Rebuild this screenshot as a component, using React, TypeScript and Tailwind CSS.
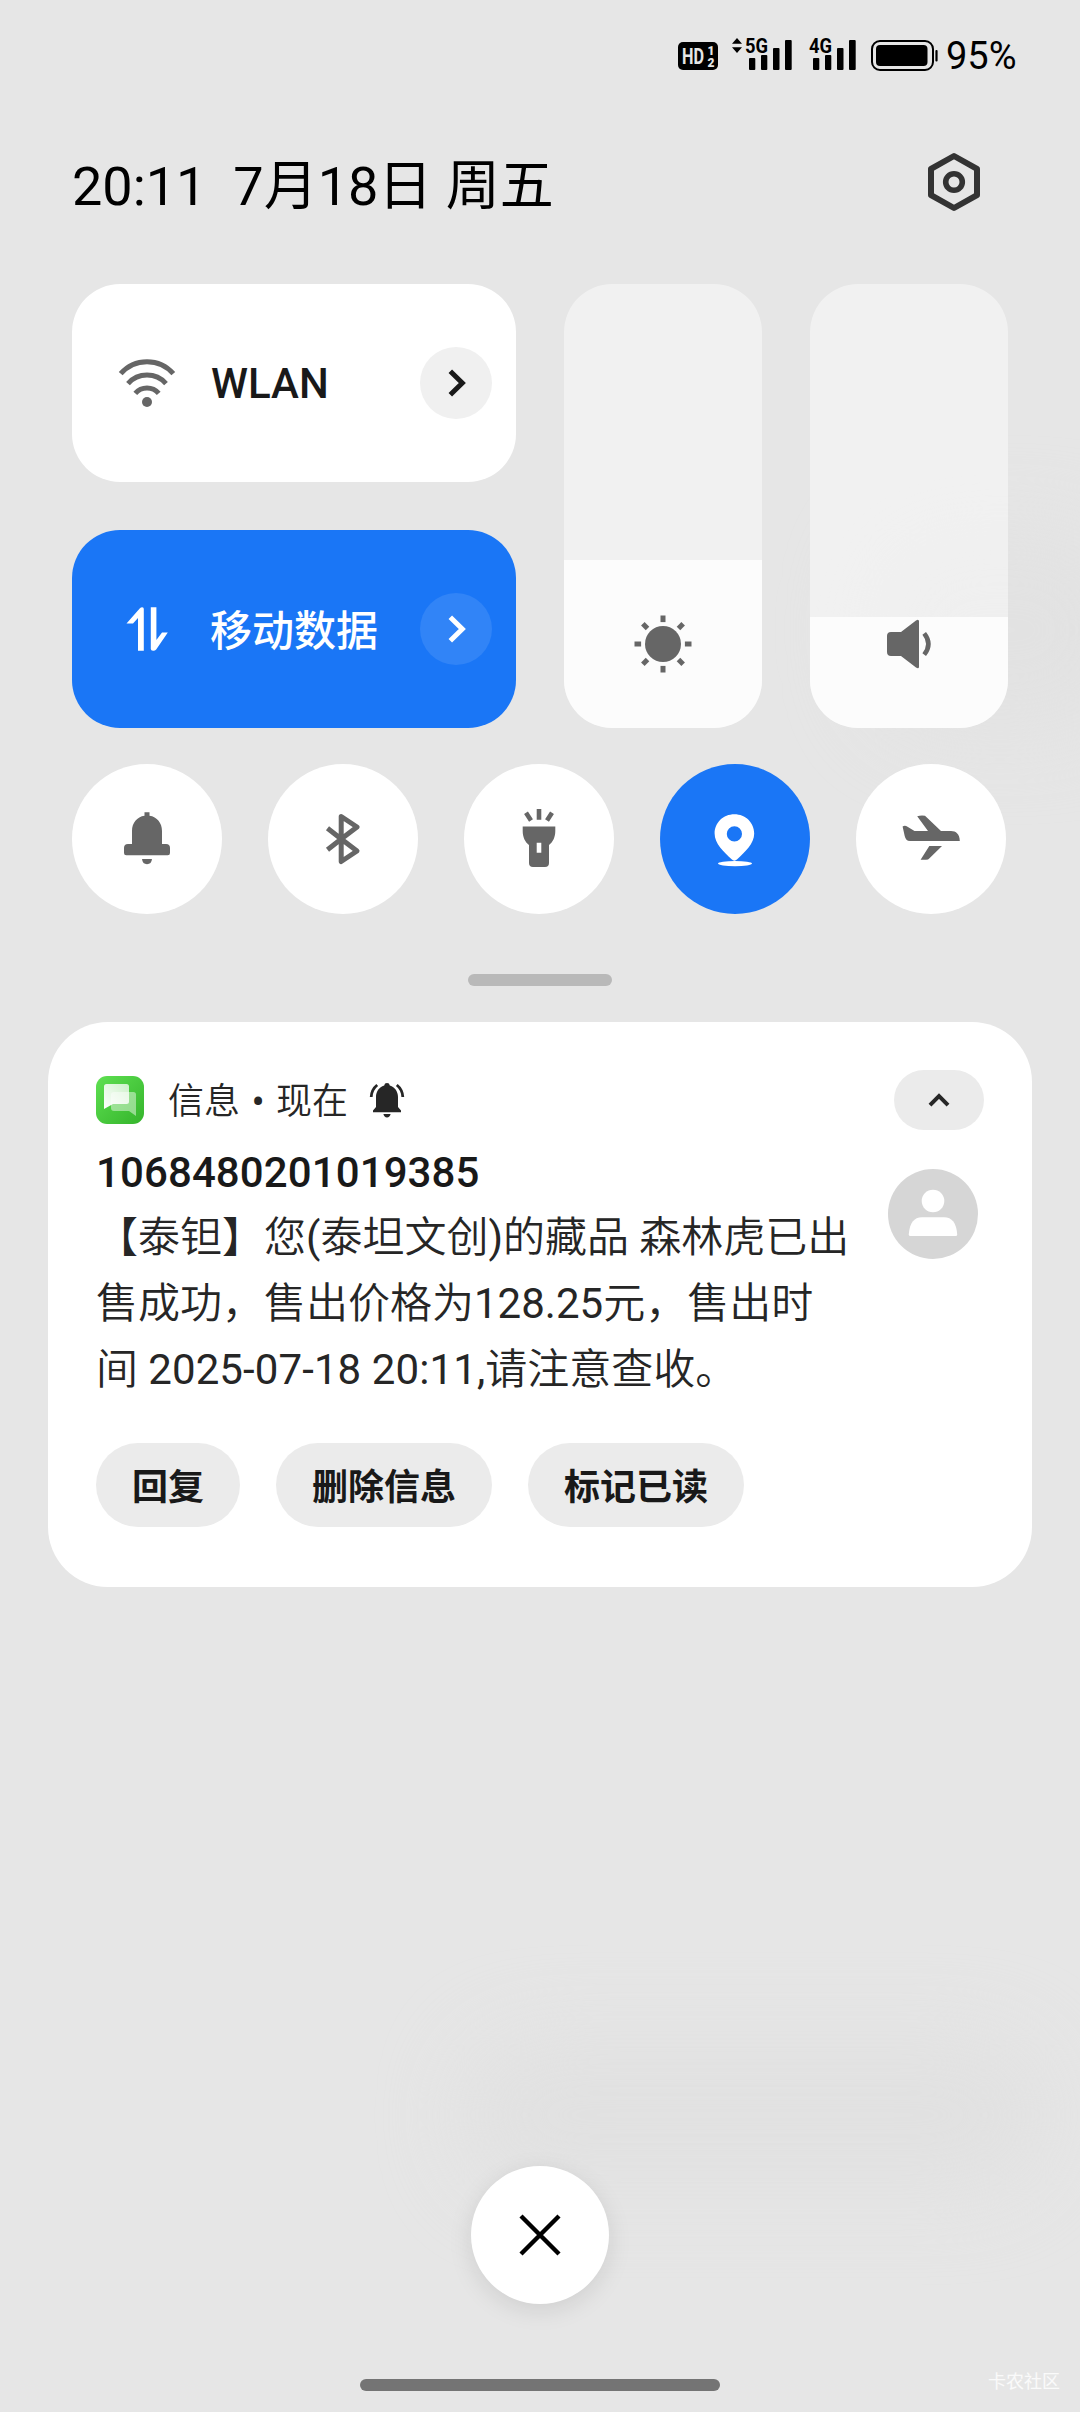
import type { ReactNode } from 'react';

type IconProps = { children: ReactNode; size?: number; className?: string };

// every icon is drawn around its own centre
const Icon = ({ children, size = 64, className }: IconProps) => (
	<svg
		width={size}
		height={size}
		viewBox={`${-size / 2} ${-size / 2} ${size} ${size}`}
		fill="currentColor"
		className={className}
	>
		{children}
	</svg>
);

const WifiIcon = () => (
	<Icon>
		<g fill="none" stroke="currentColor" strokeWidth="5">
			<path d="M-26.3 -9.3A34.8 34.8 0 0 1 26.3 -9.3" />
			<path d="M-19 0.6A25.5 25.5 0 0 1 19 0.6" />
			<path d="M-11.7 10.3A15.5 15.5 0 0 1 11.7 10.3" />
		</g>
		<circle cy="19" r="5" />
	</Icon>
);

const DataIcon = () => (
	<Icon>
		<path d="M-20.5 -5.6L-7.3 -20.4Q-6.2 -21.7 -4.7 -21.7Q-3.2 -21.6 -3.2 -20V21.7H-9V-11L-14 -5.6Z" />
		<path d="M20.8 3.4L9.2 20.4Q8 21.8 6 21.7Q3.8 21.6 3.8 20V-21.7H9.4V11L15 3.4Z" />
	</Icon>
);

const SunIcon = () => (
	<Icon>
		<circle r="18" />
		{[0, 45, 90, 135, 180, 225, 270, 315].map((angle) => (
			<rect key={angle} x="-2.5" y="-28.5" width="5" height="6.6" transform={`rotate(${angle})`} />
		))}
	</Icon>
);

const SpeakerIcon = () => (
	<Icon>
		<path d="M-18 -12H-8L7 -23.6Q10 -25.5 10 -22.5V22.5Q10 25.5 7 23.6L-8 12H-18Q-22 12 -22 8V-8Q-22 -12 -18 -12Z" />
		<path d="M15.2 -10.6Q23.6 0 15.2 10.6" fill="none" stroke="currentColor" strokeWidth="4.6" />
	</Icon>
);

const BellIcon = () => (
	<Icon>
		<path d="M-2.5 -26.7H2.5V-23.2C10 -22.2 15 -16 15 -8V5H19Q23 5 23 9V14Q23 16.3 20.7 16.3H-20.7Q-23 16.3 -23 14V9Q-23 5 -19 5H-15V-8C-15 -16 -10 -22.2 -2.5 -23.2Z" />
		<path d="M-5 20H5Q4.5 25.2 0 25.2Q-4.5 25.2 -5 20Z" />
	</Icon>
);

const BluetoothIcon = () => (
	<Icon>
		<path
			d="M-15.5 -10.8L-1.8 0L14 12L-1.8 22.5V-22.5L14 -12L-1.8 0L-15.5 10.8"
			fill="none"
			stroke="currentColor"
			strokeWidth="5"
			strokeLinejoin="round"
		/>
	</Icon>
);

const TorchIcon = () => (
	<Icon>
		<path d="M0 -30V-19.3M-13 -26.3L-8 -18.6M13 -26.3L8 -18.6" stroke="currentColor" strokeWidth="4.6" />
		<path
			fillRule="evenodd"
			d="M-16.3 -12.4H16.3V-8C16.3 -2 14 3 10 6V24Q10 28 6 28H-6Q-10 28 -10 24V6C-14 3 -16.3 -2 -16.3 -8ZM-2.3 3.8V13.8H2.3V3.8Z"
		/>
	</Icon>
);

const PinIcon = () => (
	<Icon>
		<path
			fillRule="evenodd"
			d="M-0.6 -24.8C10.6 -24.8 19.2 -16.4 19.2 -5.5C19.2 5 10 12.5 2.2 20.3Q-0.6 23 -3.4 20.3C-11.2 12.5 -20.4 5 -20.4 -5.5C-20.4 -16.4 -11.8 -24.8 -0.6 -24.8ZM-0.6 -12.7A7.6 7.6 0 1 0 -0.6 2.5A7.6 7.6 0 1 0 -0.6 -12.7Z"
		/>
		<ellipse cy="24.6" rx="17" ry="2.7" />
	</Icon>
);

const PlaneIcon = () => (
	<Icon>
		<path d="M-28.4 -12.6Q-26 -13.8 -23.5 -12.3L-16.5 -8H-3L-13.8 -22.8Q-10 -23.8 -6 -23.2L10 -8H20C25 -8 28.7 -5 28.8 2H-21C-24 2 -25.6 0 -26.3 -3Z" />
		<path d="M-1.7 7H11L-1.5 19.3Q-2.7 20.8 -5 20.8H-10.4Z" />
	</Icon>
);

const GearIcon = () => (
	<Icon>
		<g fill="none" stroke="currentColor" strokeLinejoin="round">
			<path d="M0 -26L23 -13.2V13.2L0 26L-23 13.2V-13.2Z" strokeWidth="6" />
			<circle r="8.3" strokeWidth="5.6" />
		</g>
	</Icon>
);

const RingingIcon = () => (
	<Icon size={40}>
		<path d="M0 -17Q2.5 -17 2.8 -14.6C8 -13 11 -8.5 11 -3V7L14 10.5V12.3H-14V10.5L-11 7V-3C-11 -8.5 -8 -13 -2.8 -14.6Q-2.5 -17 0 -17Z" />
		<path d="M-3.6 14H3.6Q2.8 17.4 0 17.4Q-2.8 17.4 -3.6 14Z" />
		<path
			d="M-15.8 -3Q-15.4 -10.5 -9.8 -15M15.8 -3Q15.4 -10.5 9.8 -15"
			fill="none"
			stroke="currentColor"
			strokeWidth="2.8"
		/>
	</Icon>
);

const MessagesIcon = () => (
	<svg width="48" height="48" viewBox="0 0 48 48">
		<defs>
			<linearGradient id="app" x1="0" y1="0" x2="1" y2="1">
				<stop offset="0" stopColor="#5fe052" />
				<stop offset="1" stopColor="#34b42b" />
			</linearGradient>
			<linearGradient id="front" x1="0" y1="1" x2="1" y2="0">
				<stop offset="0" stopColor="#fff" />
				<stop offset="1" stopColor="#fff" stopOpacity="0.72" />
			</linearGradient>
		</defs>
		<rect width="48" height="48" rx="11" fill="url(#app)" />
		<path d="M18 16H37.5Q40 16 40 18.5V40L33 35H18Q15 35 15 32V19Q15 16 18 16Z" fill="#fff" fillOpacity="0.45" />
		<path d="M10.5 8H30.5Q33 8 33 10.5V25.5Q33 28 30.5 28H17L8 33V10.5Q8 8 10.5 8Z" fill="url(#front)" />
	</svg>
);

const Signal = ({ label, arrows }: { label: string; arrows?: boolean }) => (
	<svg width={arrows ? 60 : 48} height="44" viewBox={arrows ? '-12 -3 60 44' : '0 -3 48 44'}>
		{arrows && <path d="M-12 6.7L-7 1L-2 6.7ZM-12 10.3H-2L-7 16Z" />}
		<text
			x="1"
			y="16"
			fontSize="20"
			fontWeight="700"
			textLength="23"
			lengthAdjust="spacingAndGlyphs"
			className="font-['Roboto',sans-serif]"
		>
			{label}
		</text>
		<rect x="5" y="21" width="6.3" height="12" rx="1" />
		<rect x="17" y="18" width="6.3" height="15" rx="1" />
		<rect x="29" y="11" width="6.5" height="22" rx="1" />
		<rect x="41" y="3" width="6.7" height="30" rx="1" />
	</svg>
);

const StatusBar = () => (
	<div className="flex h-28 items-center justify-end pr-[60px]">
		<svg width="40" height="28" viewBox="0 0 40 28" className="mr-3.5" fontWeight="700" fill="#e6e6e6">
			<rect width="40" height="28" rx="5" fill="#000" />
			<g className="font-['Roboto',sans-serif]">
				<text x="4" y="22" fontSize="22" textLength="22" lengthAdjust="spacingAndGlyphs">
					HD
				</text>
				<g fontSize="12" fontWeight="900">
					<text x="29.5" y="13">
						1
					</text>
					<text x="29.5" y="24.8">
						2
					</text>
				</g>
			</g>
		</svg>
		<Signal label="5G" arrows />
		<div className="w-4" />
		<Signal label="4G" />
		<svg width="67" height="32" viewBox="0 0 67 32" className="ml-[15px]">
			<rect x="1" y="1" width="61" height="29" rx="8" fill="none" stroke="#000" strokeWidth="2" />
			<rect x="5" y="5" width="51.5" height="21" rx="4" />
			<rect x="64.4" y="10" width="2.2" height="11.5" rx="1" />
		</svg>
		<span className="ml-2 w-[74px] text-[38px] leading-none whitespace-nowrap">95%</span>
	</div>
);

const Tile = ({ icon, label, active }: { icon: ReactNode; label: string; active?: boolean }) => (
	<div
		className={
			active
				? 'flex h-[198px] items-center rounded-[48px] bg-[#1a76f6] pr-6 pl-[43px] text-white'
				: 'flex h-[198px] items-center rounded-[48px] bg-white pr-6 pl-[43px] text-[#666]'
		}
	>
		{icon}
		<span
			className={
				active ? 'mt-1 ml-[31px] text-[42px] font-medium' : 'mt-px ml-8 text-[42px] font-medium text-[#191919]'
			}
		>
			{label}
		</span>
		<div
			className={
				active
					? 'ml-auto flex size-[72px] items-center justify-center rounded-full bg-[#3184f7]'
					: 'ml-auto flex size-[72px] items-center justify-center rounded-full bg-[#f0f0f0] text-[#191919]'
			}
		>
			<Icon size={32}>
				<path d="M-5.7 -11.8L6.3 0L-5.7 11.8" fill="none" stroke="currentColor" strokeWidth="5" />
			</Icon>
		</div>
	</div>
);

const Slider = ({ icon, level }: { icon: ReactNode; level: number }) => (
	<div className="relative flex h-[444px] w-[198px] items-end justify-center overflow-hidden rounded-[48px] bg-white/45 text-[#666]">
		<div className="absolute inset-x-0 bottom-0 bg-[#fcfcfc]" style={{ height: level }} />
		<div className="relative mb-[52px]">{icon}</div>
	</div>
);

const toggles = [
	{ name: 'bell', icon: <BellIcon /> },
	{ name: 'bluetooth', icon: <BluetoothIcon /> },
	{ name: 'torch', icon: <TorchIcon /> },
	{ name: 'location', icon: <PinIcon />, active: true },
	{ name: 'plane', icon: <PlaneIcon /> },
];

const Notification = () => (
	<div className="mx-12 mt-9 h-[565px] rounded-[60px] bg-white px-12 pt-12 text-[#262626]">
		<div className="flex h-[60px] items-center">
			<MessagesIcon />
			<span className="mt-1 ml-6 w-[199px] text-[36px] leading-[54px] font-[350] whitespace-nowrap">
				信息<span className="inline-block w-9 text-center font-medium">•</span>现在
			</span>
			<RingingIcon />
			<div className="ml-auto flex h-[60px] w-[90px] items-center justify-center rounded-full bg-[#ebebeb]">
				<Icon size={32}>
					<path d="M-9 5.2L0 -4L9 5.2" fill="none" stroke="currentColor" strokeWidth="4" />
				</Icon>
			</div>
		</div>
		<div className="mt-[10px] flex">
			<div className="w-[792px]">
				<div className="text-[42px] leading-[66px] font-medium tracking-[0.1px] text-[#191919]">1068480201019385</div>
				<p className="mt-[-1px] text-[42px] leading-[66px] font-[350] whitespace-nowrap">
					【泰钽】您<span className="font-normal">(</span>泰坦文创<span className="font-normal">)</span>的藏品 森林虎已出
					<br />
					售成功，售出价格为<span className="font-normal">128.25</span>元，售出时
					<br />间 <span className="font-normal tracking-[0.1px]">2025-07-18 20:11,</span>请注意查收。
				</p>
			</div>
			<div className="mt-[29px] flex size-[90px] shrink-0 items-center justify-center rounded-full bg-[#d6d6d6] text-white">
				<Icon>
					<circle cy="-13" r="11.3" />
					<path d="M-11 3.2H11C19 3.2 23.5 9 24.2 20.5Q24.2 22 22.7 22H-22.7Q-24.2 22 -24.2 20.5C-23.5 9 -19 3.2 -11 3.2Z" />
				</Icon>
			</div>
		</div>
		<div className="mt-10 flex gap-9 text-[36px] font-bold text-[#191919]">
			{['回复', '删除信息', '标记已读'].map((action) => (
				<div key={action} className="flex h-[84px] items-center rounded-full bg-[#ebebeb] px-9 pt-[5px]">
					{action}
				</div>
			))}
		</div>
	</div>
);

export default function App() {
	return (
		<div className="relative flex h-[2412px] w-[1080px] flex-col overflow-hidden bg-[#e6e6e6] font-['Roboto','Noto_Sans_CJK_SC',sans-serif] text-black">
			{/* faint shapes of the wallpaper behind the shade */}
			<div className="absolute top-[530px] left-[870px] h-[200px] w-[260px] rounded-[80px] bg-[#e2e2e2] blur-2xl" />
			<div className="absolute top-[2040px] left-[465px] h-[150px] w-[580px] rounded-[75px] bg-[#e1e1e1] blur-2xl" />

			<div className="relative flex grow flex-col">
				<StatusBar />
				<div className="flex h-[146px] items-center justify-between pr-[94px] pl-[72px]">
					<div className="mt-[3px] text-[54px] leading-[72px] whitespace-pre">20:11{'  '}7月18日 周五</div>
					<div className="mb-1.5 text-[#333]">
						<GearIcon />
					</div>
				</div>

				<div className="mx-[72px] mt-[26px] flex gap-12">
					<div className="flex w-[444px] flex-col gap-12">
						<Tile icon={<WifiIcon />} label="WLAN" />
						<Tile icon={<DataIcon />} label="移动数据" active />
					</div>
					<Slider icon={<SunIcon />} level={168} />
					<Slider icon={<SpeakerIcon />} level={111} />
				</div>

				<div className="mx-[72px] mt-9 flex gap-[46px]">
					{toggles.map((toggle) => (
						<div
							key={toggle.name}
							className={
								toggle.active
									? 'flex size-[150px] items-center justify-center rounded-full bg-[#1a76f6] text-white'
									: 'flex size-[150px] items-center justify-center rounded-full bg-white text-[#666]'
							}
						>
							{toggle.icon}
						</div>
					))}
				</div>

				<div className="mt-[60px] h-3 w-36 self-center rounded-full bg-[#b9b9b9]" />

				<Notification />

				<div className="mt-auto flex size-[138px] items-center justify-center self-center rounded-full bg-white shadow-[0_6px_24px_rgba(0,0,0,0.1)]">
					<Icon>
						<path d="M-19 -19L19 19M19 -19L-19 19" stroke="currentColor" strokeWidth="4.4" />
					</Icon>
				</div>
				<div className="mt-[69px] flex h-[39px] items-start justify-between pr-5">
					<div className="mt-1.5 ml-[360px] h-3 w-[360px] rounded-full bg-[#747474]" />
					<span className="text-[18px] leading-[18px] text-white/80">卡农社区</span>
				</div>
			</div>
		</div>
	);
}
